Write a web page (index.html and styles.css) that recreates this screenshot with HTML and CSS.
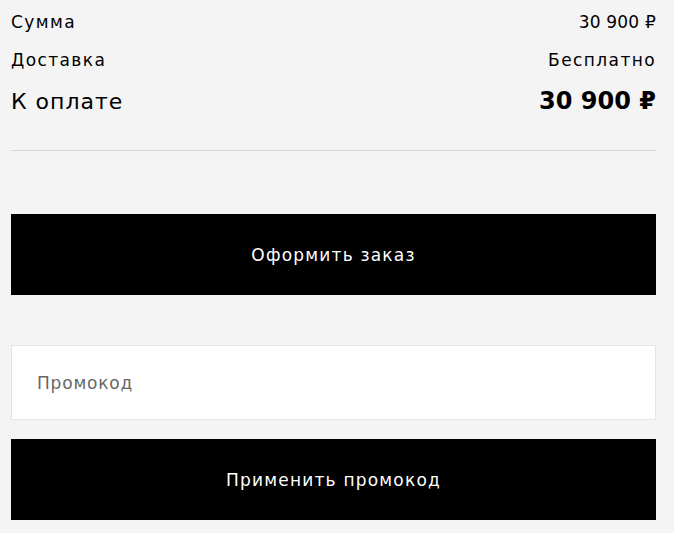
FILE: index.html
```html
<!DOCTYPE html>
<html lang="ru">
<head>
    <meta charset="UTF-8">
    <meta name="viewport" content="width=device-width, initial-scale=1.0">
    <title>Итого</title>
    <link rel="stylesheet" href="styles.css">
</head>
<body>
    <div class="summary">
        <div class="row first">
            <span>Сумма</span>
            <span class="price">30 900 ₽</span>
        </div>
        <div class="row">
            <span>Доставка</span>
            <span>Бесплатно</span>
        </div>
        <div class="row total">
            <span>К оплате</span>
            <span class="total-price">30 900 ₽</span>
        </div>

        <hr class="divider">

        <button class="btn checkout">Оформить заказ</button>

        <input class="promo" type="text" placeholder="Промокод">
        <button class="btn apply">Применить промокод</button>
    </div>
</body>
</html>
```

FILE: styles.css
```css
/* CSS styles */
body {
    font-family: "DejaVu Sans", sans-serif;
    margin: 0;
    padding: 0;
    background-color: #f4f4f4;
    color: #000;
}

.summary {
    width: 645px;
    margin-left: 11px;
    display: flex;
    flex-direction: column;
}

.row {
    display: flex;
    justify-content: space-between;
    align-items: center;
    font-size: 17px;
    letter-spacing: 1.4px;
    height: 32px;
}

.row.first {
    height: 44px;
}

.price {
    font-size: 17px;
    letter-spacing: 0.2px;
}

.total {
    font-size: 22px;
    letter-spacing: 1px;
    height: 50px;
}

.total-price {
    font-weight: 700;
    font-size: 24px;
    letter-spacing: 0;
}

.divider {
    border: none;
    border-top: 1px solid #d9d9d9;
    margin: 24px 0 0 0;
    width: 100%;
}

.btn {
    background-color: #000;
    color: #fff;
    border: none;
    height: 81px;
    font-family: inherit;
    font-size: 17px;
    letter-spacing: 1.2px;
    cursor: pointer;
}

.checkout {
    margin-top: 63px;
}

.promo {
    margin-top: 50px;
    height: 75px;
    box-sizing: border-box;
    border: 1px solid #e5e5e5;
    background-color: #fff;
    padding: 0 25px;
    font-family: inherit;
    font-size: 17px;
    letter-spacing: 0.8px;
}

.promo::placeholder {
    color: #666;
}

.apply {
    margin-top: 19px;
}
```
